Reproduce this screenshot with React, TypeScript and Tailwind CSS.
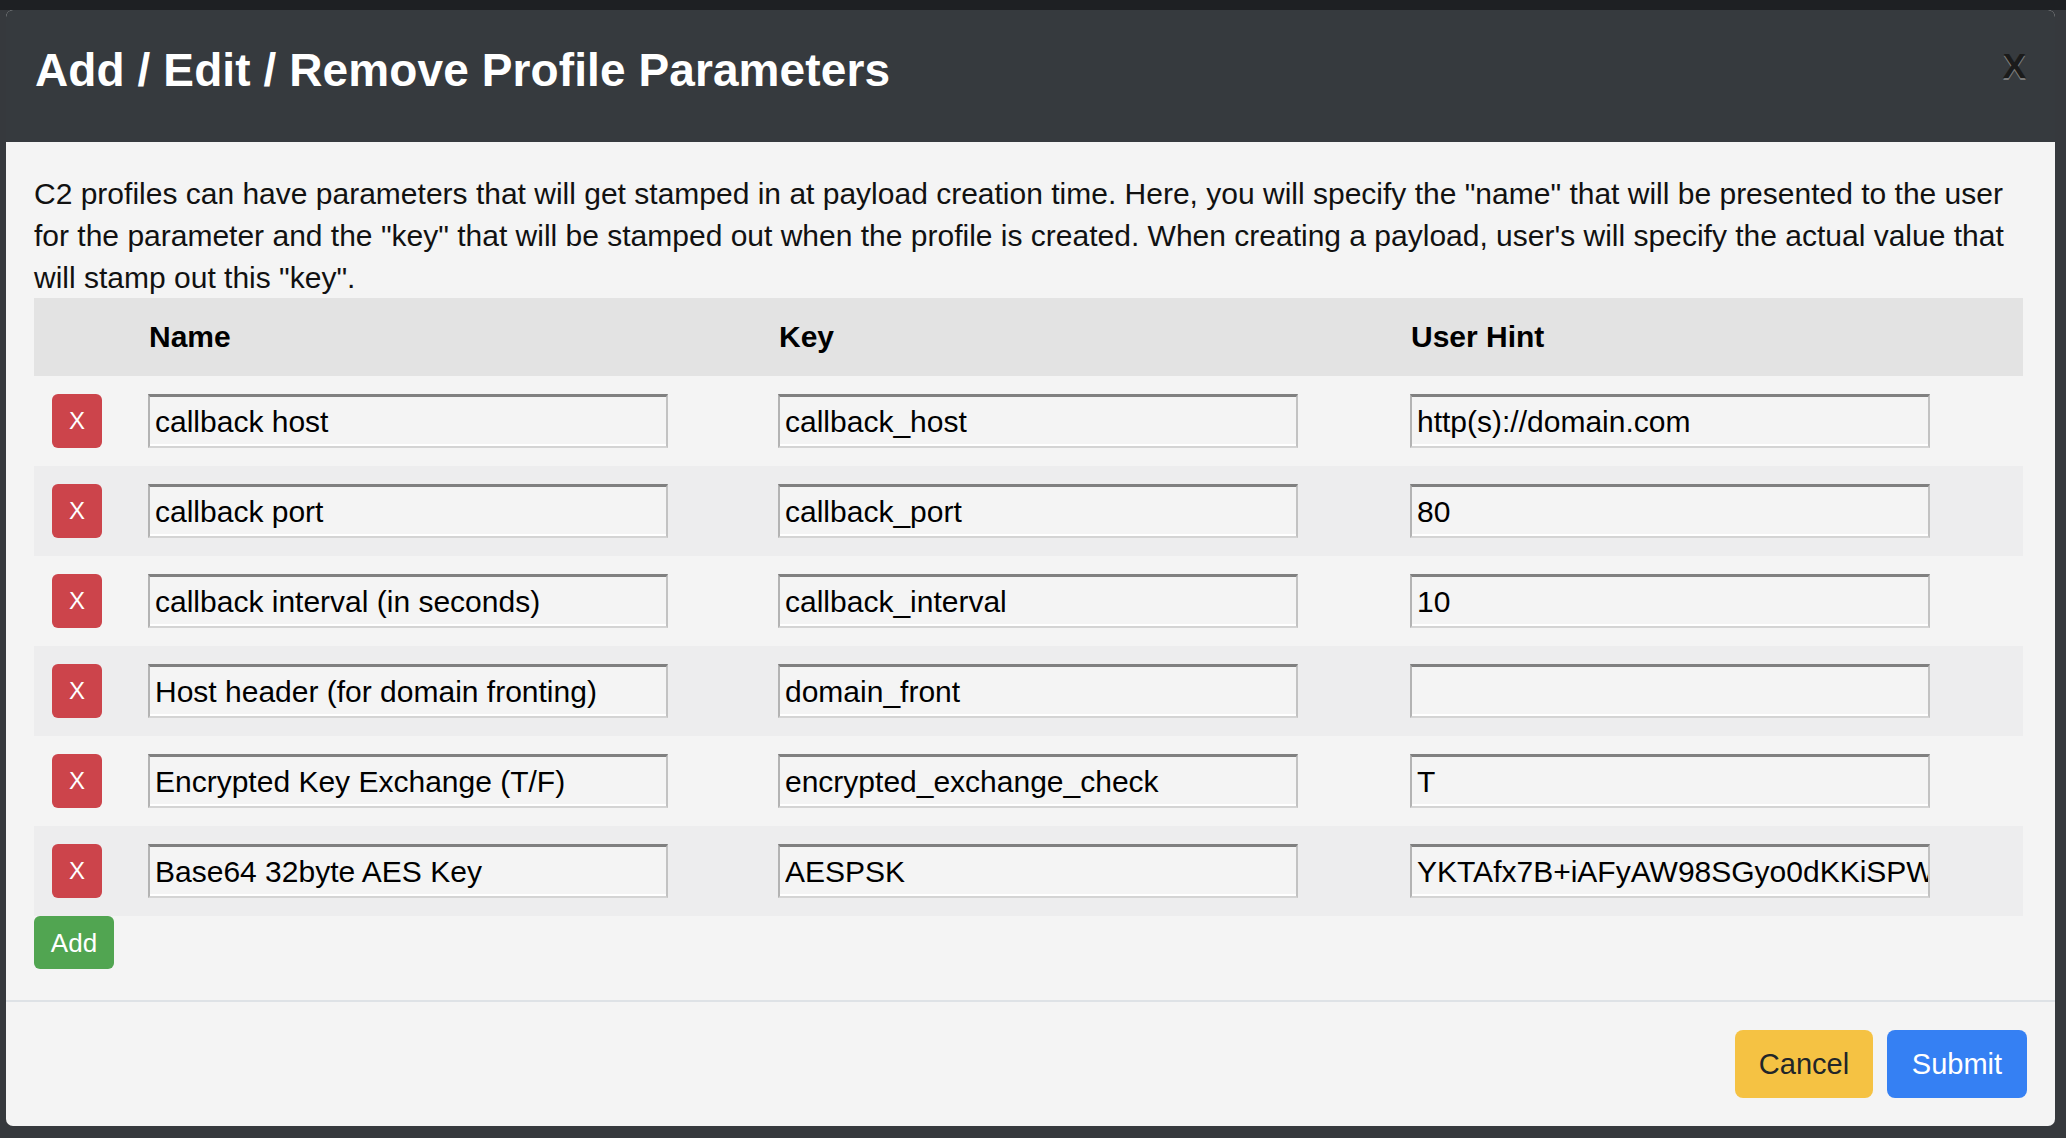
import React from 'react';

const params = [
  { name: 'callback host', key: 'callback_host', hint: 'http(s)://domain.com' },
  { name: 'callback port', key: 'callback_port', hint: '80' },
  { name: 'callback interval (in seconds)', key: 'callback_interval', hint: '10' },
  { name: 'Host header (for domain fronting)', key: 'domain_front', hint: '' },
  { name: 'Encrypted Key Exchange (T/F)', key: 'encrypted_exchange_check', hint: 'T' },
  { name: 'Base64 32byte AES Key', key: 'AESPSK', hint: 'YKTAfx7B+iAFyAW98SGyo0dKKiSPW5tKkXr8QmZc3nA=' },
];

function Field({ value }: { value: string }) {
  return (
    <input
      readOnly
      value={value}
      className="h-[54px] w-[520px] bg-[#f4f4f4] border-2 border-t-[3px] border-t-[#808080] border-l-[#b3b3b3] border-r-[#c2c2c2] border-b-[#d4d4d4] shadow-[inset_0_-2px_0_#ffffff] pl-[5px] text-[30px] text-black outline-none"
    />
  );
}

export default function App() {
  return (
    <div className="w-[2066px] h-[1138px] overflow-hidden bg-[linear-gradient(#1e2023_0_10px,#36393d_10px)] pt-[10px] pl-[6px] font-['Liberation_Sans',Arial,sans-serif]">
      <div className="w-[2049px] h-[1116px] rounded-[7px] overflow-hidden bg-[#f4f4f4] flex flex-col">
        {/* header */}
        <div className="h-[132px] shrink-0 bg-[#363a3e] flex items-start justify-between pl-[29px] pr-[29px] pt-[37px]">
          <h1 className="text-[46px] leading-none font-bold text-white tracking-[0.1px]">
            Add / Edit / Remove Profile Parameters
          </h1>
          <button className="text-[35px] leading-none font-bold text-[#1b1b1b] [text-shadow:0_2px_0_#7a7a7a] mt-[1px]">
            X
          </button>
        </div>

        {/* body */}
        <div className="flex-1 pl-[28px] pr-[32px] pt-[31px]">
          <p className="text-[30px] leading-[42px] text-[#111]">
            C2 profiles can have parameters that will get stamped in at payload creation time. Here, you will specify the "name" that will be presented to the user for the parameter and the "key" that will be stamped out when the profile is created. When creating a payload, user's will specify the actual value that will stamp out this "key".
          </p>

          <div className="-mt-[1px]">
            <div className="grid grid-cols-[96px_630px_632px_631px] h-[78px] items-center bg-[#e3e3e3] text-[30px] leading-[30px] font-bold text-black">
              <div />
              <div className="pl-[19px]">Name</div>
              <div className="pl-[19px]">Key</div>
              <div className="pl-[19px]">User Hint</div>
            </div>
            {params.map((p, i) => (
              <div
                key={p.key}
                className={`grid grid-cols-[96px_630px_632px_631px] h-[90px] items-center ${i % 2 === 1 ? 'bg-[#ededee]' : 'bg-[#f4f4f4]'}`}
              >
                <div className="pl-[18px]">
                  <button className="w-[50px] h-[54px] rounded-[6px] bg-[#cc444b] text-white text-[24px] leading-none flex items-center justify-center">
                    X
                  </button>
                </div>
                <div className="pl-[18px]"><Field value={p.name} /></div>
                <div className="pl-[18px]"><Field value={p.key} /></div>
                <div className="pl-[18px]"><Field value={p.hint} /></div>
              </div>
            ))}
          </div>

          <button className="w-[80px] h-[53px] rounded-[6px] bg-[#51a551] text-white text-[26px] leading-none">
            Add
          </button>
        </div>

        {/* footer */}
        <div className="shrink-0 border-t-2 border-[#dee2e6] flex justify-end gap-[14px] px-[28px] py-[28px]">
          <button className="w-[138px] h-[68px] rounded-[8px] bg-[#f5c243] text-[#212529] text-[29px] leading-none">
            Cancel
          </button>
          <button className="w-[140px] h-[68px] rounded-[8px] bg-[#3580f3] text-white text-[29px] leading-none">
            Submit
          </button>
        </div>
      </div>
    </div>
  );
}
